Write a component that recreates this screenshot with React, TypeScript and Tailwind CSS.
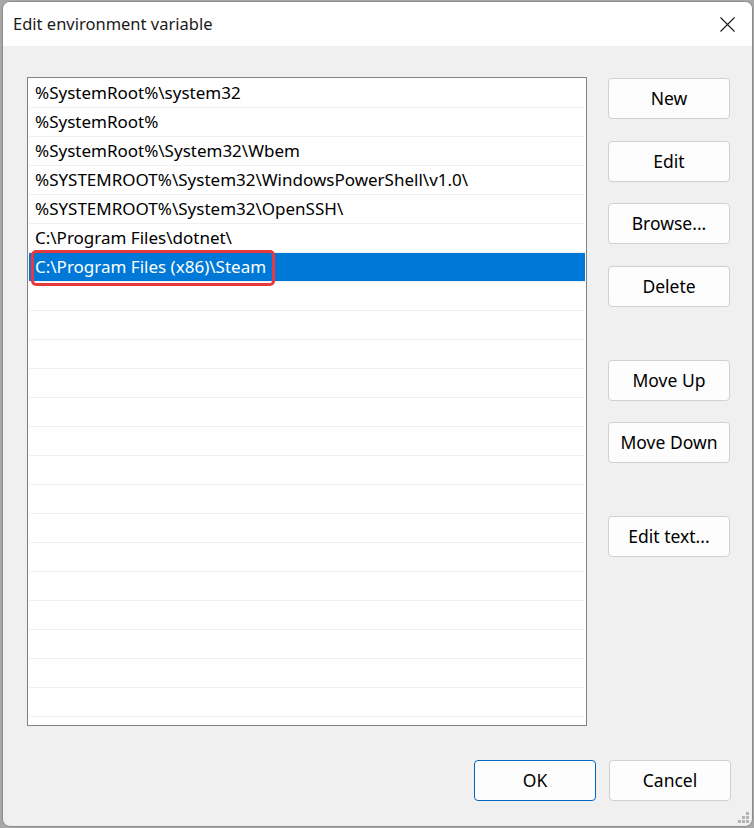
const paths = [
  "%SystemRoot%\\system32",
  "%SystemRoot%",
  "%SystemRoot%\\System32\\Wbem",
  "%SYSTEMROOT%\\System32\\WindowsPowerShell\\v1.0\\",
  "%SYSTEMROOT%\\System32\\OpenSSH\\",
  "C:\\Program Files\\dotnet\\",
  "C:\\Program Files (x86)\\Steam",
];

const SELECTED = 6;
const ROW_COUNT = 23;

const sideButtons = [
  { label: "New", mt: "mt-[1px]" },
  { label: "Edit", mt: "mt-[22px]" },
  { label: "Browse...", mt: "mt-[21px]" },
  { label: "Delete", mt: "mt-[22px]" },
  { label: "Move Up", mt: "mt-[53px]" },
  { label: "Move Down", mt: "mt-[21px]" },
  { label: "Edit text...", mt: "mt-[53px]" },
];

const Button = ({ label, primary, className = "" }: { label: string; primary?: boolean; className?: string }) => (
  <div
    className={`w-[122px] h-[41px] rounded-[4px] bg-[#fdfdfd] flex items-center justify-center text-[17.5px] text-black ${
      primary ? "border border-[#0067c0]" : "border border-[#d0d0d0]"
    } ${className}`}
  >
    {label}
  </div>
);

const CloseIcon = () => (
  <svg width="15" height="15" viewBox="0 0 15 15" fill="none" stroke="#1a1a1a" strokeWidth="1.1">
    <path d="M0.5 0.5 L14.5 14.5 M14.5 0.5 L0.5 14.5" />
  </svg>
);

const Grip = () => (
  <svg width="14" height="14" viewBox="0 0 14 14" fill="#b4b4b4">
    <rect x="9" y="1" width="3" height="3" />
    <rect x="5" y="5" width="3" height="3" />
    <rect x="9" y="5" width="3" height="3" />
    <rect x="1" y="9" width="3" height="3" />
    <rect x="5" y="9" width="3" height="3" />
    <rect x="9" y="9" width="3" height="3" />
  </svg>
);

export default function App() {
  const rows = Array.from({ length: ROW_COUNT }, (_, i) => paths[i] ?? "");

  return (
    <div
      className="w-[754px] h-[828px] bg-[#a7a7a7] pt-[1px] pl-[2px] overflow-hidden"
      style={{ fontFamily: '"Noto Sans", "Open Sans", sans-serif' }}
    >
      <div className="relative w-[751px] h-[826px] rounded-[8px] border border-[#8c8c8c] bg-[#f0f0f0] overflow-hidden flex flex-col">
        {/* title bar */}
        <div className="h-[44px] bg-white flex items-center justify-between pl-[10px] pr-[17px] shrink-0">
          <span className="text-[16.5px] text-[#1a1a1a]">Edit environment variable</span>
          <CloseIcon />
        </div>

        <div className="flex-1 pl-[24px] pr-[21px] pt-[31px] flex flex-col">
          <div className="flex gap-[21px]">
            {/* list */}
            <div className="w-[560px] h-[649px] border border-[#828282] bg-white overflow-hidden pt-[1px] px-[1px]">
              {rows.map((text, i) => (
                <div
                  key={i}
                  className={`relative h-[29px] border-b border-[#efefef] pl-[6px] flex items-center text-[17px] whitespace-nowrap ${
                    i === SELECTED ? "bg-[#0078d7] text-white" : "text-black"
                  }`}
                >
                  {text}
                  {i === SELECTED && (
                    <div className="absolute left-[2px] top-[-3px] w-[244px] h-[36px] rounded-[5px] border-[3px] border-[#e5383f]" />
                  )}
                </div>
              ))}
            </div>

            {/* side buttons */}
            <div className="flex flex-col">
              {sideButtons.map((b) => (
                <Button key={b.label} label={b.label} className={b.mt} />
              ))}
            </div>
          </div>

          <div className="mt-[34px] flex justify-end gap-[13px]">
            <Button label="OK" primary />
            <Button label="Cancel" />
          </div>
        </div>

        <div className="absolute right-[1px] bottom-[1px]">
          <Grip />
        </div>
      </div>
    </div>
  );
}
